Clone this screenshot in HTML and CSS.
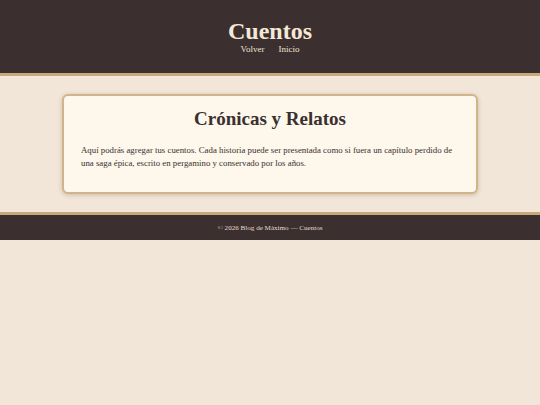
FILE: index.html
```html
<!DOCTYPE html>
<html lang="es">
<head>
<meta charset="utf-8">
<title>Cuentos</title>
<link rel="stylesheet" href="styles.css">
</head>
<body>
<header class="site-header">
  <h1 class="site-title">Cuentos</h1>
  <nav class="site-nav">
    <a href="#">Volver</a>
    <a href="#">Inicio</a>
  </nav>
</header>
<main class="content">
  <section class="card">
    <h2 class="card-title">Crónicas y Relatos</h2>
    <p class="card-text">Aquí podrás agregar tus cuentos. Cada historia puede ser presentada como si fuera un capítulo perdido de una saga épica, escrito en pergamino y conservado por los años.</p>
  </section>
</main>
<footer class="site-footer">© 2026 Blog de Máximo — Cuentos</footer>
</body>
</html>
```
FILE: styles.css
```css
html, body {
  margin: 0;
  padding: 0;
}
body {
  background: #f2e6d9;
  font-family: "Liberation Serif", serif;
  color: #3b2f2f;
}
.site-header {
  background: #3b2f2f;
  border-bottom: 3px solid #c9a87c;
  height: 73px;
  display: flex;
  flex-direction: column;
  align-items: center;
}
.site-title {
  margin: 21px 0 3px;
  font-size: 24px;
  line-height: 20px;
  font-weight: bold;
  color: #f5e8d6;
}
.site-nav {
  display: flex;
  gap: 14px;
  font-size: 9px;
  line-height: 10px;
}
.site-nav a {
  color: #f0e2cf;
  text-decoration: none;
}
.content {
  padding: 18px 62px 18px;
}
.card {
  background: #fdf7ec;
  border: 2px solid #d1b589;
  border-radius: 6px;
  box-shadow: 0 1px 4px rgba(90, 60, 30, 0.25);
  padding: 10px 17px 22px;
}
.card-title {
  margin: 0 0 12px;
  text-align: center;
  font-size: 19px;
  line-height: 26px;
  font-weight: bold;
  color: #3b2f2f;
}
.card-text {
  margin: 0;
  font-size: 8.8px;
  line-height: 13px;
  color: #3b2f2f;
}
.site-footer {
  background: #3b2f2f;
  border-top: 3px solid #c9a87c;
  height: 25px;
  display: flex;
  align-items: center;
  justify-content: center;
  color: #e8dccb;
  font-size: 7.1px;
}
```
